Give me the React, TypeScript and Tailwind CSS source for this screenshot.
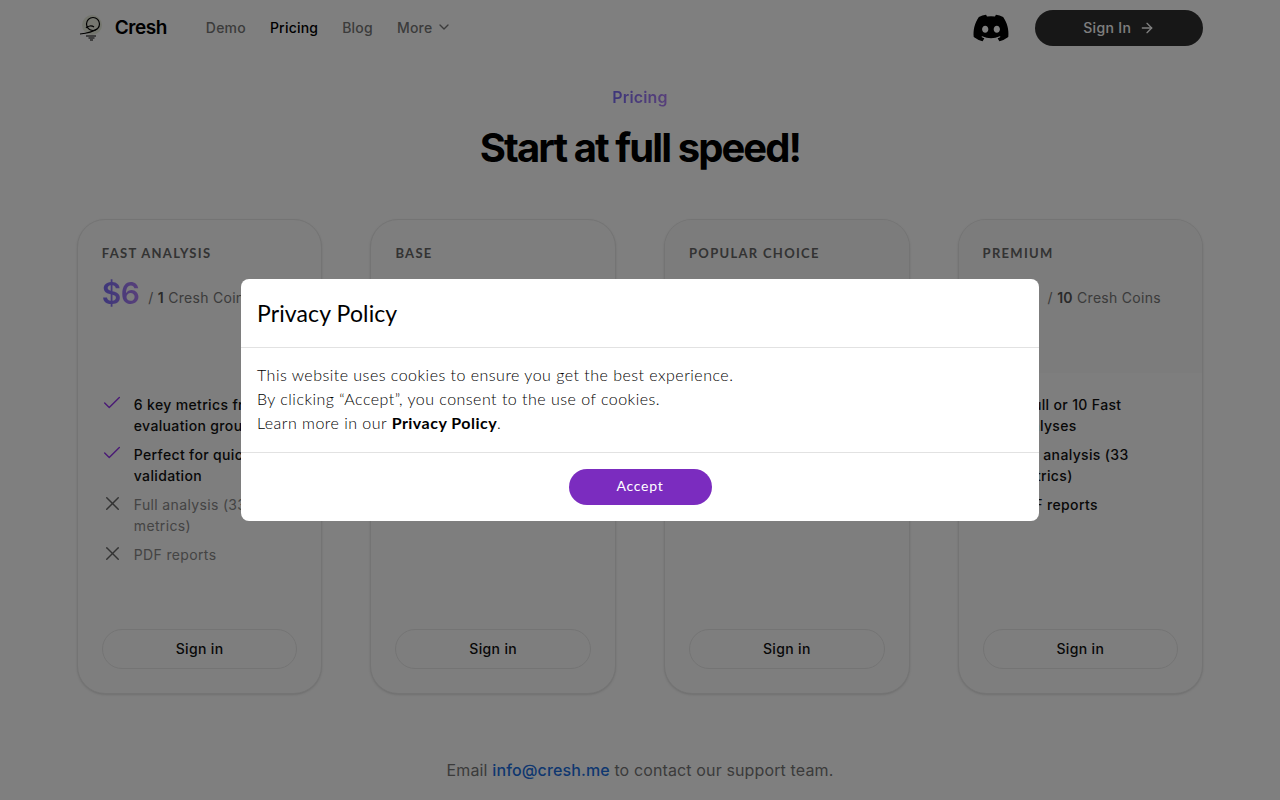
import { Check, ChevronDown, ArrowRight, X } from "lucide-react";
import { FaDiscord } from "react-icons/fa";

const inter = { fontFamily: "Inter, sans-serif" };

interface Feature {
    text: string;
    included: boolean;
}

interface Plan {
    name: string;
    price: string;
    unit: string;
    coin: string;
    shaded?: boolean;
    features: Feature[];
}

const plans: Plan[] = [
    {
        name: "FAST ANALYSIS",
        price: "$6",
        unit: "1",
        coin: "Cresh Coin",
        features: [
            { text: "6 key metrics from evaluation group", included: true },
            { text: "Perfect for quick validation", included: true },
            { text: "Full analysis (33 metrics)", included: false },
            { text: "PDF reports", included: false },
        ],
    },
    {
        name: "BASE",
        price: "$15",
        unit: "3",
        coin: "Cresh Coins",
        features: [
            { text: "Full analysis (33 metrics)", included: true },
            { text: "PDF reports", included: true },
        ],
    },
    {
        name: "POPULAR CHOICE",
        price: "$25",
        unit: "5",
        coin: "Cresh Coins",
        shaded: true,
        features: [
            { text: "Full analysis (33 metrics)", included: true },
            { text: "PDF reports", included: true },
        ],
    },
    {
        name: "PREMIUM",
        price: "$39",
        unit: "10",
        coin: "Cresh Coins",
        shaded: true,
        features: [
            { text: "1 Full or 10 Fast analyses", included: true },
            { text: "Full analysis (33 metrics)", included: true },
            { text: "PDF reports", included: true },
        ],
    },
];

function Logo() {
    return (
        <svg width="26" height="26" viewBox="0 0 26 26" fill="none" className="shrink-0">
            <circle cx="13" cy="10" r="10" fill="#c9cfa8" opacity="0.4" />
            <circle cx="14" cy="9" r="6.5" stroke="#000" strokeWidth="1.2" fill="#fff" fillOpacity="0.15" />
            <path d="M1 19c5-.5 12-1.5 17-5" stroke="#000" strokeWidth="1.2" />
            <path d="M7 13c2-2.5 6-2.5 8-1M7 21h10M9.5 23h6M11 25h3" stroke="#000" strokeWidth="1.2" />
        </svg>
    );
}

function PlanCard({ plan }: { plan: Plan }) {
    return (
        <div className="h-[475px] flex flex-col rounded-[28px] border border-[#e8e8e8] bg-[#fcfcfc] shadow-sm overflow-hidden">
            <div className={`h-[153px] px-6 pt-[23px] shrink-0 ${plan.shaded ? "bg-[#f8f8f8]" : ""}`}>
                <div className="text-[13px] leading-5 font-bold tracking-[0.1em] text-[#666]" style={{ fontFamily: "Lato, sans-serif" }}>
                    {plan.name}
                </div>
                <div className="mt-[10px] flex items-center h-10">
                    <span className="text-[30px] leading-10 font-semibold tracking-[-0.02em] bg-gradient-to-r from-[#7a6cf5] to-[#b080f5] bg-clip-text text-transparent">
                        {plan.price}
                    </span>
                    <span className="ml-[9px] mt-[9px] text-[14px] tracking-[0.02em] text-[#777]">
                        / <b className="font-semibold text-[#555]">{plan.unit}</b> {plan.coin}
                    </span>
                </div>
            </div>
            <ul className="px-6 pt-[21px] flex flex-col gap-2 flex-1">
                {plan.features.map((f) => (
                    <li key={f.text} className="flex gap-[11px]">
                        {f.included ? (
                            <Check size={22} strokeWidth={1.5} className="shrink-0 text-[#9333ea] -mx-[0.5px] -mt-[2px]" />
                        ) : (
                            <X size={23} strokeWidth={1.5} className="shrink-0 text-[#666] -mx-[1px] -mt-[2px]" />
                        )}
                        <span className={`text-[14px] leading-[21px] tracking-[0.025em] ${f.included ? "text-[#111] font-medium" : "text-[#888]"}`}>
                            {f.text}
                        </span>
                    </li>
                ))}
            </ul>
            <div className="px-6 pb-6">
                <button className="w-full h-10 pb-[2px] rounded-full border border-[#e8e8e8] text-[14px] font-medium tracking-[0.025em] text-[#111]">
                    Sign in
                </button>
            </div>
        </div>
    );
}

export default function App() {
    return (
        <div className="relative h-screen overflow-hidden bg-white" style={inter}>
            <div className="w-[88%] mx-auto">
                <header className="h-14 flex items-center">
                    <div className="flex items-center gap-[10px] pl-[2px]">
                        <Logo />
                        <span className="text-[19px] font-semibold text-black tracking-[-0.025em]">Cresh</span>
                    </div>
                    <nav className="ml-[39px] pb-[2px] flex items-center gap-6 text-[14px] font-medium tracking-[0.015em] text-[#777]">
                        <a>Demo</a>
                        <a className="text-black">Pricing</a>
                        <a>Blog</a>
                        <a className="flex items-center gap-1">
                            More <ChevronDown size={16} />
                        </a>
                    </nav>
                    <div className="ml-auto flex items-center gap-[25px]">
                        <FaDiscord size={38} className="text-black" />
                        <button className="w-[168px] h-9 rounded-full bg-[#2e2e2e] text-white text-[14px] font-medium tracking-[0.025em] flex items-center justify-center gap-2">
                            <span className="-mt-[2px]">Sign In</span> <ArrowRight size={16} />
                        </button>
                    </div>
                </header>

                <div className="pt-[29px] text-center">
                    <div className="text-[16px] leading-6 font-semibold tracking-[0.01em] bg-gradient-to-r from-[#7a6cf5] to-[#b080f5] bg-clip-text text-transparent w-fit mx-auto">
                        Pricing
                    </div>
                    <h1 className="mt-[14px] text-[40px] leading-[50px] font-bold tracking-[-0.048em] text-black">
                        Start at full speed!
                    </h1>
                </div>

                <div className="mt-[46px] grid grid-cols-4 gap-12">
                    {plans.map((p) => (
                        <PlanCard key={p.name} plan={p} />
                    ))}
                </div>

                <p className="mt-[64px] text-center text-[16px] leading-6 tracking-[0.008em] text-[#777]">
                    Email <a className="font-medium text-[#1d6fe0]">info@cresh.me</a> to contact our support team.
                </p>
            </div>

            <div className="fixed inset-0 bg-black/50 flex items-start justify-center pt-[279px]">
                <div className="w-[798px] rounded-lg bg-white text-black" style={{ fontFamily: "Lato, sans-serif" }}>
                    <div className="h-[69px] px-4 flex items-center border-b border-[#e2e2e2]">
                        <h2 className="text-[23px] tracking-[0.005em]">Privacy Policy</h2>
                    </div>
                    <div className="h-[105px] px-4 pt-[15px] text-[16px] leading-6 font-light tracking-[0.03em] border-b border-[#e2e2e2]">
                        <p>This website uses cookies to ensure you get the best experience.</p>
                        <p>By clicking “Accept”, you consent to the use of cookies.</p>
                        <p>
                            Learn more in our <b className="font-bold">Privacy Policy</b>.
                        </p>
                    </div>
                    <div className="h-[68px] flex items-center justify-center">
                        <button className="w-[143px] h-9 pb-[3px] rounded-full bg-[#7b2cbf] text-white text-[14px] tracking-[0.05em]">Accept</button>
                    </div>
                </div>
            </div>
        </div>
    );
}
